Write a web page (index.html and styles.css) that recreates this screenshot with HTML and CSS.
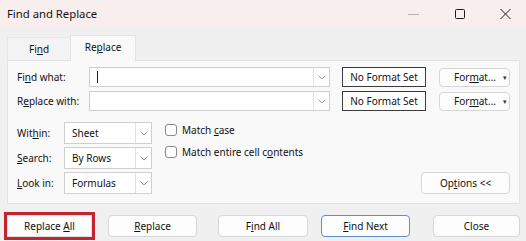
FILE: index.html
```html
<!DOCTYPE html>
<html>
<head>
<meta charset="utf-8">
<link rel="stylesheet" href="styles.css">
</head>
<body>
<div class="window">
  <div class="titlebar">
    <span class="title">Find and Replace</span>
    <div class="controls">
      <span class="ctl"><svg width="11" height="10" viewBox="0 0 11 10"><path d="M0 5.5 H11" stroke="#b3b3b3" stroke-width="1"/></svg></span>
      <span class="ctl"><svg width="11" height="10" viewBox="0 0 11 10"><rect x="1.5" y="0.5" width="9" height="9" rx="1" fill="none" stroke="#1b1b1b" stroke-width="1"/></svg></span>
      <span class="ctl"><svg width="11" height="10" viewBox="0 0 11 10"><path d="M0.5 0 L10.5 10 M10.5 0 L0.5 10" stroke="#1b1b1b" stroke-width="1"/></svg></span>
    </div>
  </div>
  <div class="tabs">
    <div class="tab tab-find"><span>Fi<u>n</u>d</span></div>
    <div class="tab tab-replace"><span>Re<u>p</u>lace</span></div>
  </div>
  <div class="panel">
    <div class="row">
      <label class="lbl lbl-wide"><span>Fi<u>n</u>d what:</span></label>
      <div class="combo combo-wide"><span class="field"><span class="caret"></span></span><span class="arrow"><svg width="8" height="5" viewBox="0 0 8 5"><path d="M0.5 0.5 L4 4 L7.5 0.5" fill="none" stroke="#9a9a9a"/></svg></span></div>
      <div class="nofmt"><span>No Format Set</span></div>
      <div class="btn fmt"><span class="fmt-text">For<u>m</u>at...</span><span class="tri">▾</span></div>
    </div>
    <div class="row row2">
      <label class="lbl lbl-wide"><span>R<u>e</u>place with:</span></label>
      <div class="combo combo-wide"><span class="field"></span><span class="arrow"><svg width="8" height="5" viewBox="0 0 8 5"><path d="M0.5 0.5 L4 4 L7.5 0.5" fill="none" stroke="#9a9a9a"/></svg></span></div>
      <div class="nofmt"><span>No Format Set</span></div>
      <div class="btn fmt"><span class="fmt-text">For<u>m</u>at...</span><span class="tri">▾</span></div>
    </div>
    <div class="lower">
      <div class="opts">
        <label class="lbl"><span>Wit<u>h</u>in:</span></label>
        <div class="combo sel"><span class="field">Sheet</span><span class="arrow"><svg width="8" height="5" viewBox="0 0 8 5"><path d="M0.5 0.5 L4 4 L7.5 0.5" fill="none" stroke="#9a9a9a"/></svg></span></div>
        <label class="lbl"><span><u>S</u>earch:</span></label>
        <div class="combo sel"><span class="field">By Rows</span><span class="arrow"><svg width="8" height="5" viewBox="0 0 8 5"><path d="M0.5 0.5 L4 4 L7.5 0.5" fill="none" stroke="#9a9a9a"/></svg></span></div>
        <label class="lbl"><span><u>L</u>ook in:</span></label>
        <div class="combo sel"><span class="field">Formulas</span><span class="arrow"><svg width="8" height="5" viewBox="0 0 8 5"><path d="M0.5 0.5 L4 4 L7.5 0.5" fill="none" stroke="#9a9a9a"/></svg></span></div>
      </div>
      <div class="checks">
        <div class="check"><span class="box"></span><span>Match <u>c</u>ase</span></div>
        <div class="check"><span class="box"></span><span>Match entire cell c<u>o</u>ntents</span></div>
      </div>
      <div class="btn options"><span>Op<u>t</u>ions &lt;&lt;</span></div>
    </div>
  </div>
  <div class="footer">
    <div class="highlight"><div class="btn fbtn b-all"><span>Replace <u>A</u>ll</span></div></div>
    <div class="btn fbtn b-rep"><span><u>R</u>eplace</span></div>
    <div class="btn fbtn b-fall"><span>F<u>i</u>nd All</span></div>
    <div class="btn fbtn b-next"><span><u>F</u>ind Next</span></div>
    <div class="btn fbtn b-close"><span>Close</span></div>
  </div>
</div>
</body>
</html>
```
FILE: styles.css
```css
* { box-sizing: border-box; }
html, body { margin: 0; padding: 0; }
body {
  width: 526px;
  height: 241px;
  overflow: hidden;
  background: #f0f0f0;
  font-family: "Noto Sans", "Open Sans", sans-serif;
  font-size: 10px;
  color: #111;
}
u { text-underline-offset: 1px; text-decoration-thickness: 1px; }
.window { width: 526px; height: 241px; }
.titlebar {
  height: 27px;
  background: #f9eeee;
  display: flex;
  align-items: center;
  padding-left: 7px;
}
.title { font-size: 11.3px; }
.controls { margin-left: auto; display: flex; align-items: center; height: 27px; }
.ctl { display: flex; align-items: center; }
.ctl:nth-child(1) { margin-right: 35px; }
.ctl:nth-child(2) { margin-right: 35px; }
.ctl:nth-child(3) { margin-right: 15px; }

.tabs {
  display: flex;
  align-items: flex-end;
  height: 33px;
  padding-left: 7px;
}
.tab {
  display: flex;
  align-items: center;
  justify-content: center;
}
.tab-find {
  width: 63px;
  height: 23px;
  background: #f3f3f3;
  border: 1px solid #e6e6e6;
  border-bottom: none;
  border-right: none;
  padding-bottom: 1px;
}
.tab-replace {
  width: 66px;
  height: 26px;
  background: #f9f9f9;
  border: 1px solid #e2e2e2;
  border-bottom: none;
  position: relative;
  margin-bottom: -1px;
  z-index: 1;
  padding-bottom: 3px;
}
.panel {
  margin-left: 7px;
  width: 513px;
  height: 144px;
  background: #f9f9f9;
  border: 1px solid #e2e2e2;
  padding: 6px 9px 0 9px;
}
.row { display: flex; align-items: center; height: 20px; }
.row2 { margin-top: 4px; }
.lbl { display: flex; align-items: center; }
.lbl-wide { width: 72px; }
.combo {
  display: flex;
  height: 20px;
  background: #fff;
  border: 1px solid #cfcfcf;
}
.combo-wide { width: 241px; }
.field { flex: 1; display: flex; align-items: center; padding-left: 7px; }
.caret { width: 1px; height: 12px; background: #1b1b1b; }
.arrow {
  width: 16px;
  border-left: 1px solid #e2e2e2;
  display: flex;
  align-items: center;
  justify-content: center;
}
.nofmt {
  margin-left: 12px;
  width: 84px;
  height: 20px;
  border: 1px solid #3a3a3a;
  background: #fff;
  display: flex;
  align-items: center;
  justify-content: center;
}
.btn {
  background: #fdfdfd;
  border: 1px solid #d6d6d6;
  border-radius: 4px;
  display: flex;
  align-items: center;
  justify-content: center;
}
.fmt {
  margin-left: 13px;
  width: 71px;
  height: 19px;
  justify-content: flex-start;
  padding-left: 14px;
  padding-right: 2px;
}
.fmt-text { flex: 1; }
.tri { font-size: 7px; color: #333; }

.lower { display: flex; margin-top: 11px; }
.opts {
  display: grid;
  grid-template-columns: 47px 88px;
  grid-auto-rows: 22px;
  row-gap: 3px;
}
.sel { height: 22px; }
.sel .field { padding-left: 7px; }
.checks {
  margin-left: 13px;
  margin-top: 2px;
  display: flex;
  flex-direction: column;
  row-gap: 10px;
}
.check { display: flex; align-items: center; height: 12px; }
.box {
  width: 12px;
  height: 12px;
  border: 1px solid #8a8a8a;
  border-radius: 3px;
  background: #fff;
  margin-right: 5px;
}
.options {
  margin-left: auto;
  align-self: flex-end;
  width: 89px;
  height: 22px;
}

.footer {
  display: flex;
  align-items: center;
  margin-top: 8px;
  padding-left: 4px;
}
.highlight {
  border: 3px solid #c42430;
  padding: 0;
}
.fbtn { height: 22px; }
.b-all { width: 85px; border-radius: 0; border-color: #e0e0e0; }
.b-rep { margin-left: 13px; width: 89px; }
.b-fall { margin-left: 21px; width: 90px; }
.b-next { margin-left: 13px; width: 89px; border-color: #5d8fcc; }
.b-close { margin-left: 23px; width: 87px; }
```
